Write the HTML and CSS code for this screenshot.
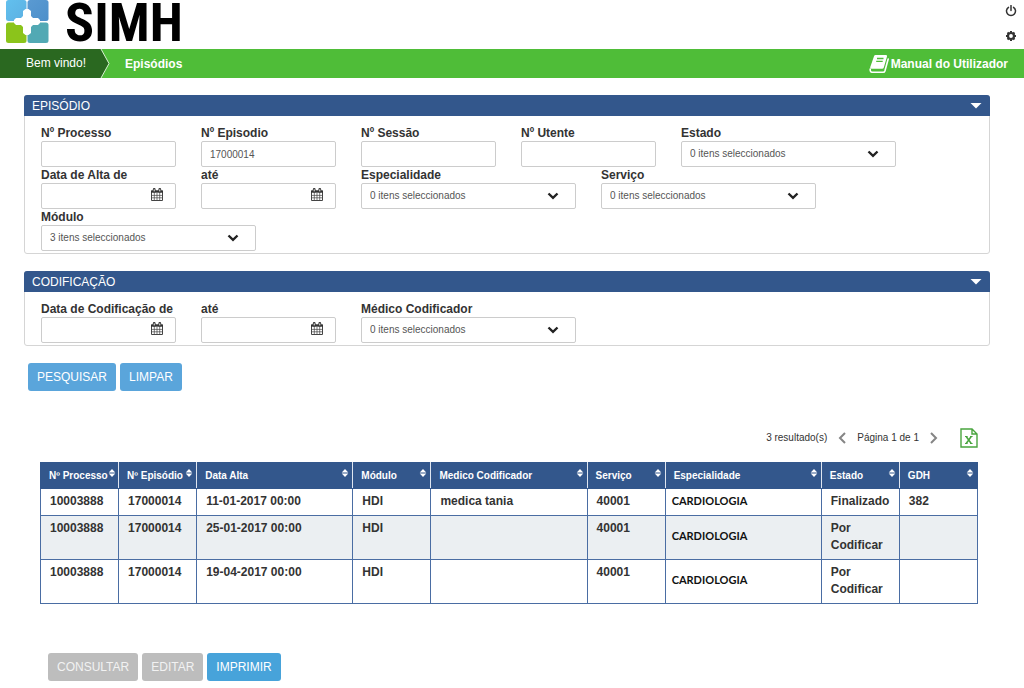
FILE: index.html
```html
<!DOCTYPE html>
<html lang="pt">
<head>
<meta charset="utf-8">
<title>SIMH - Episódios</title>
<link rel="stylesheet" href="styles.css">
</head>
<body>
<svg class="defs" aria-hidden="true">
  <symbol id="calendar" viewBox="0 0 12 13">
    <path d="M.5 3h11v9.500h-11z" fill="#fff" stroke="#444"/>
    <path d="M0 2.500h12v2.200H0z" fill="#333"/>
    <path d="M3.200 1.500v1.800M8.800 1.500v1.800" stroke="#333" stroke-width="2.800" stroke-linecap="round"/>
    <path d="M3.200 1.400v2M8.800 1.400v2" stroke="#fff" stroke-width="1"/>
    <path d="M3.300 5v7M6 5v7M8.700 5v7M1 7.400h10M1 9.800h10" stroke="#444" stroke-width=".7"/>
  </symbol>
  <symbol id="chevron" viewBox="0 0 12 8">
    <path d="M1.500 1.500 6 5.800l4.500-4.300" fill="none" stroke="#222" stroke-width="2.400"/>
  </symbol>
  <symbol id="sort" viewBox="0 0 8 10">
    <path d="M4 1l3.300 3.500H.7zM4 9l3.300-3.500H.7z" fill="#fff"/>
  </symbol>
</svg>

<header class="top">
  <a class="brand" href="#" aria-label="SIMH">
    <svg class="brand-mark" viewBox="0 0 44 44" aria-hidden="true">
      <defs>
        <linearGradient id="g1" x2="1" y2="1"><stop stop-color="#62c0ee"/><stop offset="1" stop-color="#5cb0e2"/></linearGradient>
        <linearGradient id="g2" x2="1" y2="1"><stop stop-color="#5a9ad2"/><stop offset="1" stop-color="#4c8fca"/></linearGradient>
      </defs>
      <rect x="1" width="20.500" height="21" rx="2.500" fill="url(#g1)"/>
      <rect x="22.500" width="21" height="21" rx="2.500" fill="url(#g2)"/>
      <rect x="1" y="22.500" width="20.500" height="20.500" rx="2.500" fill="#8bc41b"/>
      <rect x="22.500" y="22.500" width="21" height="20.500" rx="2.500" fill="#52a9b4"/>
      <path d="M20.500 9h3l2.500 2v5l2 2h5l2 2v3l-2 2h-5l-2 2v6l-2.500 2h-3L18 33v-6l-2-2h-5l-2-2v-3l2-2h5l2-2v-5z" fill="#fff"/>
    </svg>
    <span class="brand-name">SIMH</span>
  </a>
  <div class="tools">
    <button class="tool" type="button" aria-label="Sair">
      <svg viewBox="0 0 12 12"><path d="M3.500 2.300a4.500 4.500 0 1 0 5 0M6 .5v5" fill="none" stroke="#333" stroke-width="1.500" stroke-linecap="round"/></svg>
    </button>
    <button class="tool" type="button" aria-label="Configurações">
      <svg viewBox="0 0 12 12"><circle cx="6" cy="6" r="3" fill="none" stroke="#333" stroke-width="2.200"/><path d="M6 1v1.500M6 9.500V11M1 6h1.500M9.500 6H11M2.500 2.500l1 1M8.500 8.500l1 1M9.500 2.500l-1 1M3.500 8.500l-1 1" stroke="#333" stroke-width="2"/></svg>
    </button>
  </div>
</header>

<nav class="bar">
  <span class="welcome">Bem vindo!</span>
  <svg class="bar-arrow" viewBox="0 0 10 29" preserveAspectRatio="none" aria-hidden="true"><path d="M0 0h1l8 14.500L1 29H0z" fill="#2a6820"/><path d="M1 0l8 14.500L1 29" fill="none" stroke="#d8f0d2"/></svg>
  <a class="crumb" href="#">Episódios</a>
  <a class="manual" href="#">
    <svg viewBox="0 0 20 20" aria-hidden="true"><path d="M6.500 1h10.500q1.500 0 1 1.500L14.800 13.500q-.4 1.200-1.600 1.200H2.800q-2 0-1.600-1.500L5 2.200Q5.400 1 6.500 1z" fill="#fff"/><path d="M8 4.500h6.500M7.200 7.300h6.500" stroke="#4fbd38" stroke-width="1.300"/><path d="M1.200 15q-.2 3.300 1.800 3.300h11.200q1.300 0 1.700-1.300L19.200 5" fill="none" stroke="#fff" stroke-width="1.600" stroke-linecap="round"/></svg>
    Manual do Utilizador
  </a>
</nav>

<main class="page">
  <form class="search">
    <section class="panel">
      <h2 class="panel-head">EPISÓDIO<button class="fold" type="button" aria-label="Recolher episódio"></button></h2>
      <div class="fields">
        <div class="field"><label for="processo">Nº Processo</label><input class="box" id="processo" type="text"></div>
        <div class="field"><label for="episodio">Nº Episodio</label><input class="box" id="episodio" type="text" value="17000014"></div>
        <div class="field"><label for="sessao">Nº Sessão</label><input class="box" id="sessao" type="text"></div>
        <div class="field"><label for="utente">Nº Utente</label><input class="box" id="utente" type="text"></div>
        <div class="field wide"><label for="estado">Estado</label><div class="holder"><select class="box" id="estado"><option>0 itens seleccionados</option></select><svg class="chev"><use href="#chevron"/></svg></div></div>
        <div class="field"><label for="alta-de">Data de Alta de</label><div class="holder"><input class="box" id="alta-de" type="text"><svg class="cal"><use href="#calendar"/></svg></div></div>
        <div class="field"><label for="alta-ate">até</label><div class="holder"><input class="box" id="alta-ate" type="text"><svg class="cal"><use href="#calendar"/></svg></div></div>
        <div class="field wide"><label for="especialidade">Especialidade</label><div class="holder"><select class="box" id="especialidade"><option>0 itens seleccionados</option></select><svg class="chev"><use href="#chevron"/></svg></div></div>
        <div class="field wide"><label for="servico">Serviço</label><div class="holder"><select class="box" id="servico"><option>0 itens seleccionados</option></select><svg class="chev"><use href="#chevron"/></svg></div></div>
        <div class="field wide"><label for="modulo">Módulo</label><div class="holder"><select class="box" id="modulo"><option>3 itens seleccionados</option></select><svg class="chev"><use href="#chevron"/></svg></div></div>
      </div>
    </section>

    <section class="panel">
      <h2 class="panel-head">CODIFICAÇÃO<button class="fold" type="button" aria-label="Recolher codificação"></button></h2>
      <div class="fields">
        <div class="field"><label for="cod-de">Data de Codificação de</label><div class="holder"><input class="box" id="cod-de" type="text"><svg class="cal"><use href="#calendar"/></svg></div></div>
        <div class="field"><label for="cod-ate">até</label><div class="holder"><input class="box" id="cod-ate" type="text"><svg class="cal"><use href="#calendar"/></svg></div></div>
        <div class="field wide"><label for="medico">Médico Codificador</label><div class="holder"><select class="box" id="medico"><option>0 itens seleccionados</option></select><svg class="chev"><use href="#chevron"/></svg></div></div>
      </div>
    </section>

    <div class="actions">
      <button class="btn" type="button">PESQUISAR</button>
      <button class="btn" type="button">LIMPAR</button>
    </div>
  </form>

  <section class="results">
    <div class="pager">
      <span>3 resultado(s)</span>
      <button class="page-btn" type="button" aria-label="Página anterior"><svg viewBox="0 0 8 12"><path d="M7 1 2 6l5 5" fill="none" stroke="#858585" stroke-width="2"/></svg></button>
      <span>Página 1 de 1</span>
      <button class="page-btn" type="button" aria-label="Página seguinte"><svg viewBox="0 0 8 12"><path d="M1 1l5 5-5 5" fill="none" stroke="#858585" stroke-width="2"/></svg></button>
      <button class="excel" type="button" aria-label="Exportar para Excel"><svg viewBox="0 0 18 20"><path d="M1 1h11l5 5v13H1zM12 1v5h5" fill="#fff" stroke="#4aa53f" stroke-width="1.400"/><path d="M6.200 8.500l5 7M11.200 8.500l-5 7" stroke="#4aa53f" stroke-width="1.500"/><path d="M5 8.500h2.600M10 8.500h2.600M5 15.500h2.600M10 15.500h2.600" stroke="#4aa53f"/></svg></button>
    </div>
    <table class="grid">
      <colgroup><col><col><col class="double"><col><col class="double"><col><col class="double"><col><col></colgroup>
      <thead>
        <tr>
          <th><div class="th">Nº Processo<svg><use href="#sort"/></svg></div></th>
          <th><div class="th">Nº Episódio<svg><use href="#sort"/></svg></div></th>
          <th><div class="th">Data Alta<svg><use href="#sort"/></svg></div></th>
          <th><div class="th">Módulo<svg><use href="#sort"/></svg></div></th>
          <th><div class="th">Medico Codificador<svg><use href="#sort"/></svg></div></th>
          <th><div class="th">Serviço<svg><use href="#sort"/></svg></div></th>
          <th><div class="th">Especialidade<svg><use href="#sort"/></svg></div></th>
          <th><div class="th">Estado<svg><use href="#sort"/></svg></div></th>
          <th><div class="th">GDH<svg><use href="#sort"/></svg></div></th>
        </tr>
      </thead>
      <tbody>
        <tr><td>10003888</td><td>17000014</td><td>11-01-2017 00:00</td><td>HDI</td><td>medica tania</td><td>40001</td><td class="spec">CARDIOLOGIA</td><td>Finalizado</td><td>382</td></tr>
        <tr><td>10003888</td><td>17000014</td><td>25-01-2017 00:00</td><td>HDI</td><td></td><td>40001</td><td class="spec">CARDIOLOGIA</td><td>Por Codificar</td><td></td></tr>
        <tr><td>10003888</td><td>17000014</td><td>19-04-2017 00:00</td><td>HDI</td><td></td><td>40001</td><td class="spec">CARDIOLOGIA</td><td>Por Codificar</td><td></td></tr>
      </tbody>
    </table>
    <div class="row-actions">
      <button class="btn" type="button" disabled>CONSULTAR</button>
      <button class="btn" type="button" disabled>EDITAR</button>
      <button class="btn strong" type="button">IMPRIMIR</button>
    </div>
  </section>
</main>
</body>
</html>
```
FILE: styles.css
```css
* { box-sizing: border-box; }

body {
  margin: 0;
  background: #fff;
  color: #333;
  font: 12px/16px "Liberation Sans", Arial, sans-serif;
}

button, input, select { font: inherit; color: inherit; }
button { cursor: pointer; }
a { color: inherit; text-decoration: none; }
.defs { display: none; }

/* header */
.top {
  display: flex;
  justify-content: space-between;
  height: 49px;
  padding: 0 7px 0 5px;
}
.brand { display: flex; gap: 16px; color: #000; }
.brand-mark { width: 44px; height: 44px; }
.brand-name {
  font: bold 54px/46px "Roboto Condensed", "Arial Narrow", "Liberation Sans", sans-serif;
}
.tools {
  display: flex;
  flex-direction: column;
  gap: 13px;
  padding-top: 5px;
}
.tool { display: block; border: 0; padding: 0; background: none; }
.tool svg { display: block; width: 12px; height: 12px; }

/* green bar */
.bar {
  display: flex;
  align-items: center;
  height: 29px;
  background: #4fbd38;
  color: #fff;
}
.welcome {
  align-self: stretch;
  padding: 0 14px 0 26px;
  background: #2a6820;
  line-height: 29px;
}
.bar-arrow { width: 10px; height: 29px; }
.crumb { padding-left: 15px; font-weight: bold; }
.manual {
  display: flex;
  align-items: center;
  gap: 2px;
  margin-left: auto;
  padding-right: 16px;
  font-weight: bold;
}
.manual svg { width: 20px; height: 20px; }

/* search form */
.page { padding: 17px 34px 8px 24px; }
.panel {
  margin-bottom: 17px;
  border: 1px solid #d5d5d5;
  border-radius: 3px;
}
.panel-head {
  display: flex;
  align-items: center;
  justify-content: space-between;
  height: 21px;
  margin: -1px -1px 0;
  padding: 0 8px;
  border-radius: 3px 3px 0 0;
  background: #33578c;
  color: #fff;
  font-size: 12px;
  font-weight: normal;
}
.fold {
  width: 12px;
  height: 6px;
  border: 0;
  padding: 0;
  background: #fff;
  clip-path: polygon(0 0, 100% 0, 50% 100%);
}
.fields {
  display: grid;
  grid-template-columns: repeat(12, minmax(0, 1fr));
  column-gap: 25px;
  padding: 9px 13px 2px 16px;
}
.field { grid-column: span 2; }
.field.wide { grid-column: span 3; }
.field label { display: block; font-weight: bold; white-space: nowrap; }
.holder { position: relative; }
.box {
  display: block;
  width: 100%;
  height: 26px;
  border: 1px solid #ccc;
  border-radius: 2px;
  padding: 0 8px;
  appearance: none;
  background: #fff;
  color: #555;
  font-size: 10px;
}
.cal, .chev { position: absolute; pointer-events: none; }
.cal { top: 5px; right: 13px; width: 12px; height: 13px; }
.chev { top: 9px; right: 17px; width: 12px; height: 8px; }

.btn {
  height: 28px;
  border: 0;
  border-radius: 3px;
  padding: 0 9px;
  background: #5aa5db;
  color: #fff;
}
.btn.strong { background: #47a3da; }
.btn:disabled { background: #bdbdbd; color: #f2f2f2; }
.actions { display: flex; gap: 4px; padding-left: 4px; }

/* results */
.results { padding: 35px 12px 0 16px; }
.pager {
  display: flex;
  align-items: center;
  justify-content: flex-end;
  gap: 11px;
  height: 24px;
  font-size: 10px;
}
.page-btn, .excel { border: 0; padding: 0; background: none; }
.page-btn svg { display: block; width: 8px; height: 12px; }
.excel { padding-left: 11px; }
.excel svg { display: block; width: 18px; height: 20px; }

.grid {
  width: 100%;
  margin-top: 12px;
  border-collapse: collapse;
  table-layout: fixed;
  font-weight: bold;
}
.double { width: 16.666%; }
.grid th {
  height: 26px;
  border: 1px solid #33578c;
  border-right-color: #dfe6f0;
  padding: 0;
  background: #33578c;
  color: #fff;
  font-size: 10px;
  text-align: left;
}
.grid th:last-child { border-right-color: #33578c; }
.th {
  display: flex;
  justify-content: space-between;
  padding: 0 3px 0 8px;
  white-space: nowrap;
}
.th svg { flex: none; width: 8px; height: 10px; }
.grid td {
  border: 1px solid #4a6da3;
  padding: 4px 8px 5px 9px;
  line-height: 17px;
  vertical-align: top;
}
.grid tbody tr:nth-child(even) { background: #ebeff2; }
.grid .spec {
  padding: 0 6px 4px;
  color: #111;
  font-family: Lato, sans-serif;
  font-size: 11px;
  vertical-align: middle;
}
.row-actions { display: flex; gap: 4px; padding: 49px 0 0 8px; }
```
